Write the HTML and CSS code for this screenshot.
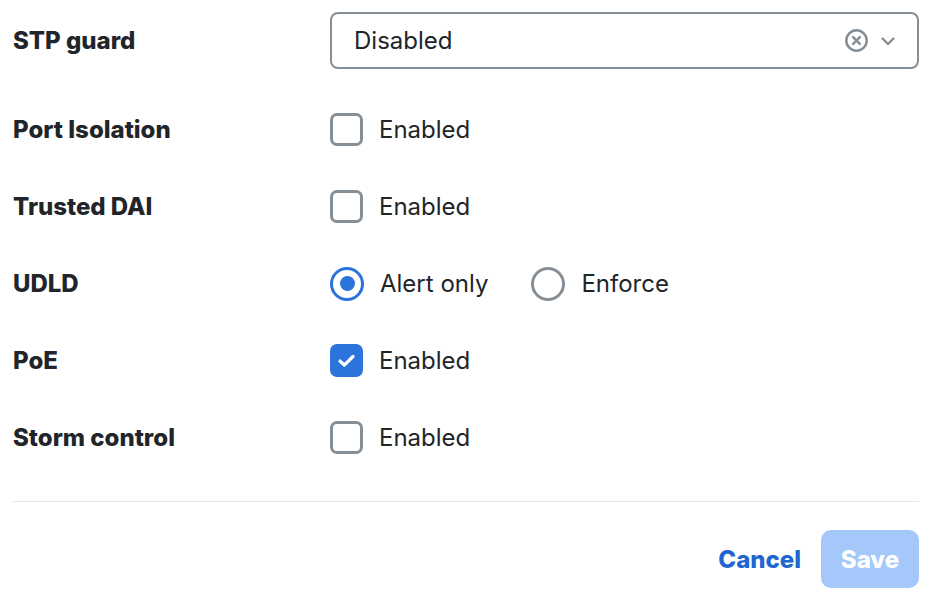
FILE: index.html
```html
<!DOCTYPE html>
<html>
<head>
<meta charset="utf-8">
<link rel="stylesheet" href="styles.css">
</head>
<body>
<div class="form">
  <div class="rows">
    <div class="row">
      <div class="label">STP guard</div>
      <div class="control">
        <div class="select">
          <span class="select-value">Disabled</span>
          <span class="select-icons">
            <svg class="clear" width="25" height="25" viewBox="0 0 24 24" fill="none" stroke="#868e96" stroke-width="2.4" stroke-linecap="round"><circle cx="12" cy="12" r="9.8"/><path d="M8.8 8.8l6.4 6.4M15.2 8.8l-6.4 6.4"/></svg>
            <svg class="chev" width="18" height="18" viewBox="0 0 18 18" fill="none" stroke="#868e96" stroke-width="2.4" stroke-linecap="round" stroke-linejoin="round"><path d="M3.5 6.5l5.5 5.5 5.5-5.5"/></svg>
          </span>
        </div>
      </div>
    </div>
    <div class="row">
      <div class="label">Port Isolation</div>
      <div class="control">
        <label class="opt"><span class="box"></span><span>Enabled</span></label>
      </div>
    </div>
    <div class="row">
      <div class="label">Trusted DAI</div>
      <div class="control">
        <label class="opt"><span class="box"></span><span>Enabled</span></label>
      </div>
    </div>
    <div class="row">
      <div class="label">UDLD</div>
      <div class="control radios">
        <label class="opt"><span class="radio checked"></span><span>Alert only</span></label>
        <label class="opt"><span class="radio"></span><span>Enforce</span></label>
      </div>
    </div>
    <div class="row">
      <div class="label">PoE</div>
      <div class="control">
        <label class="opt"><span class="box checked"><svg width="33" height="33" viewBox="0 0 33 33" fill="none" stroke="#fff" stroke-width="3.2" stroke-linecap="round" stroke-linejoin="round"><path d="M10 17l4.3 4.2L23 12.5"/></svg></span><span>Enabled</span></label>
      </div>
    </div>
    <div class="row">
      <div class="label">Storm control</div>
      <div class="control">
        <label class="opt"><span class="box"></span><span>Enabled</span></label>
      </div>
    </div>
  </div>
  <div class="divider"></div>
  <div class="actions">
    <button class="cancel">Cancel</button>
    <button class="save">Save</button>
  </div>
</div>
</body>
</html>
```
FILE: styles.css
```css
html, body {
  margin: 0;
  padding: 0;
  background: #fff;
}
body {
  font-family: Inter, "Noto Sans", sans-serif;
  color: #212529;
}
.form {
  width: 906px;
  padding: 12px 0 0 13px;
}
.rows {
  display: flex;
  flex-direction: column;
  gap: 44px;
}
.row {
  display: flex;
  align-items: center;
  height: 33px;
}
.row:first-child {
  height: 57px;
}
.label {
  width: 317px;
  flex: none;
  font-size: 24px;
  font-weight: 800;
  letter-spacing: 0;
}
.control {
  flex: 1;
  display: flex;
  align-items: center;
}
.select {
  flex: 1;
  height: 57px;
  box-sizing: border-box;
  border: 2.5px solid #868e96;
  border-radius: 8px;
  display: flex;
  align-items: center;
  padding: 0 20px 0 22px;
  font-size: 24px;
}
.select-value {
  flex: 1;
}
.select-icons {
  display: flex;
  align-items: center;
  gap: 10px;
}
.opt {
  display: flex;
  align-items: center;
  gap: 16px;
  font-size: 24px;
}
.radios {
  gap: 43px;
}
.box {
  width: 33px;
  height: 33px;
  box-sizing: border-box;
  border: 3px solid #868e96;
  border-radius: 7px;
  display: flex;
  align-items: center;
  justify-content: center;
}
.box.checked {
  background: #2b74db;
  border-color: #2b74db;
}
.box.checked svg {
  flex: none;
}
.radio {
  width: 34px;
  height: 34px;
  box-sizing: border-box;
  border: 3px solid #868e96;
  border-radius: 50%;
  display: flex;
  align-items: center;
  justify-content: center;
}
.radio.checked {
  border-color: #2b74db;
}
.radio.checked::after {
  content: "";
  width: 15px;
  height: 15px;
  border-radius: 50%;
  background: #2b74db;
}
.divider {
  height: 1px;
  background: #e3e5e8;
  margin-top: 47px;
}
.actions {
  display: flex;
  justify-content: flex-end;
  align-items: center;
  gap: 20px;
  margin-top: 28px;
}
button {
  font-family: Inter, "Noto Sans", sans-serif;
  font-size: 24px;
  font-weight: 800;
  border: none;
  cursor: pointer;
}
.cancel {
  background: none;
  color: #1f66d1;
  padding: 0;
}
.save {
  background: #a5c8fb;
  color: #fff;
  height: 58px;
  width: 98px;
  border-radius: 10px;
}
```
